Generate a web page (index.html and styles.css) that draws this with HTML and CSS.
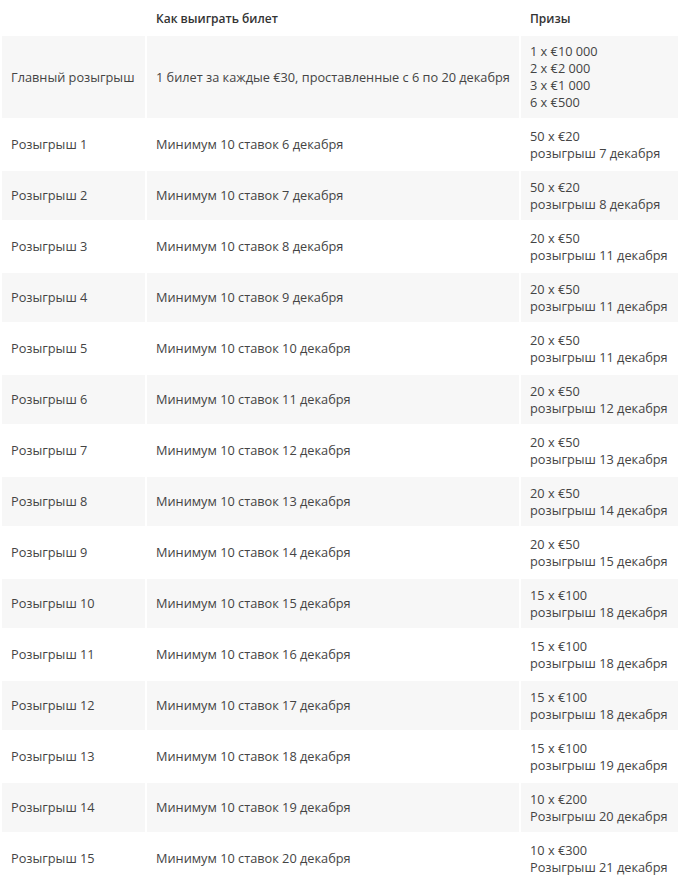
FILE: index.html
```html
<!DOCTYPE html>
<html lang="ru">
<head>
<meta charset="utf-8">
<title>Розыгрыши</title>
<link rel="stylesheet" href="styles.css">
</head>
<body>
<table class="draws">
  <colgroup>
    <col class="c1"><col class="c2"><col class="c3">
  </colgroup>
  <thead>
    <tr class="head">
      <th></th>
      <th>Как выиграть билет</th>
      <th>Призы</th>
    </tr>
  </thead>
  <tbody>
    <tr class="main">
      <td>Главный розыгрыш</td>
      <td>1 билет за каждые €30, проставленные с 6 по 20 декабря</td>
      <td>1 x €10 000<br>2 x €2 000<br>3 x €1 000<br>6 x €500</td>
    </tr>
    <tr><td>Розыгрыш 1</td><td>Минимум 10 ставок 6 декабря</td><td>50 x €20<br>розыгрыш 7 декабря</td></tr>
    <tr><td>Розыгрыш 2</td><td>Минимум 10 ставок 7 декабря</td><td>50 x €20<br>розыгрыш 8 декабря</td></tr>
    <tr><td>Розыгрыш 3</td><td>Минимум 10 ставок 8 декабря</td><td>20 x €50<br>розыгрыш 11 декабря</td></tr>
    <tr><td>Розыгрыш 4</td><td>Минимум 10 ставок 9 декабря</td><td>20 x €50<br>розыгрыш 11 декабря</td></tr>
    <tr><td>Розыгрыш 5</td><td>Минимум 10 ставок 10 декабря</td><td>20 x €50<br>розыгрыш 11 декабря</td></tr>
    <tr><td>Розыгрыш 6</td><td>Минимум 10 ставок 11 декабря</td><td>20 x €50<br>розыгрыш 12 декабря</td></tr>
    <tr><td>Розыгрыш 7</td><td>Минимум 10 ставок 12 декабря</td><td>20 x €50<br>розыгрыш 13 декабря</td></tr>
    <tr><td>Розыгрыш 8</td><td>Минимум 10 ставок 13 декабря</td><td>20 x €50<br>розыгрыш 14 декабря</td></tr>
    <tr><td>Розыгрыш 9</td><td>Минимум 10 ставок 14 декабря</td><td>20 x €50<br>розыгрыш 15 декабря</td></tr>
    <tr><td>Розыгрыш 10</td><td>Минимум 10 ставок 15 декабря</td><td>15 x €100<br>розыгрыш 18 декабря</td></tr>
    <tr><td>Розыгрыш 11</td><td>Минимум 10 ставок 16 декабря</td><td>15 x €100<br>розыгрыш 18 декабря</td></tr>
    <tr><td>Розыгрыш 12</td><td>Минимум 10 ставок 17 декабря</td><td>15 x €100<br>розыгрыш 18 декабря</td></tr>
    <tr><td>Розыгрыш 13</td><td>Минимум 10 ставок 18 декабря</td><td>15 x €100<br>розыгрыш 19 декабря</td></tr>
    <tr><td>Розыгрыш 14</td><td>Минимум 10 ставок 19 декабря</td><td>10 x €200<br>Розыгрыш 20 декабря</td></tr>
    <tr><td>Розыгрыш 15</td><td>Минимум 10 ставок 20 декабря</td><td>10 x €300<br>Розыгрыш 21 декабря</td></tr>
  </tbody>
</table>
</body>
</html>
```

FILE: styles.css
```css
html, body {
  margin: 0;
  padding: 0;
  background: #ffffff;
}

body {
  font-family: "Open Sans", "Liberation Sans", sans-serif;
  font-size: 12.75px;
  line-height: 17px;
  color: #444444;
}

.draws {
  width: 680px;
  table-layout: fixed;
  border-collapse: separate;
  border-spacing: 2px;
}

.c1 { width: 143px; }
.c2 { width: 372px; }
.c3 { width: 157px; }

.draws th,
.draws td {
  padding: 0 9px;
  text-align: left;
  vertical-align: middle;
}

.draws th {
  height: 32px;
  font-size: 12px;
  font-weight: 600;
  color: #333333;
}

.draws td {
  height: 49px;
}

.draws tr.main td {
  height: 82px;
}

.draws tbody tr:nth-child(odd) td {
  background: #f7f7f7;
}
```
